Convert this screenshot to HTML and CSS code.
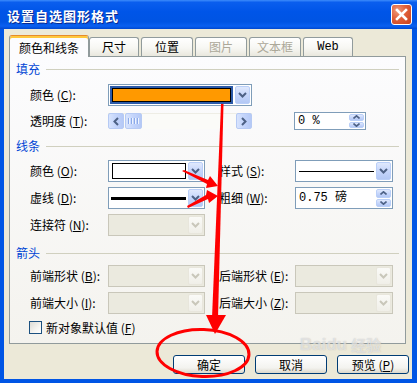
FILE: index.html
```html
<!DOCTYPE html>
<html lang="zh">
<head>
<meta charset="utf-8">
<title>设置自选图形格式</title>
<link rel="stylesheet" href="styles.css">
</head>
<body>
<div class="window">
  <div class="titlebar">
    <span class="title">设置自选图形格式</span>
    <div class="close">
      <svg width="13" height="13" viewBox="0 0 13 13"><path d="M2 2L11 11M11 2L2 11" stroke="#fff" stroke-width="2.6" stroke-linecap="square"/></svg>
    </div>
  </div>
  <div class="body">
    <div class="tabs">
      <div class="tab active w1">颜色和线条</div>
      <div class="tab w2">尺寸</div>
      <div class="tab w3">位置</div>
      <div class="tab w3 disabled">图片</div>
      <div class="tab w3 disabled">文本框</div>
      <div class="tab w4 latin">Web</div>
    </div>
    <div class="panel">
      <div class="head"><span>填充</span><i class="rule"></i></div>

      <div class="row gap8">
        <span class="lbl">颜色 (<u>C</u>):</span>
        <div class="combo wide">
          <div class="field hlfield"><div class="hl"><div class="swatch orange"></div></div></div>
          <div class="dd"><svg width="9" height="6" viewBox="0 0 9 6"><path d="M1 1L4.5 4.5L8 1" fill="none" stroke="#4D6185" stroke-width="2"/></svg></div>
        </div>
      </div>

      <div class="row short gap6">
        <span class="lbl">透明度 (<u>T</u>):</span>
        <div class="scroll">
          <div class="sbtn"><svg width="6" height="9" viewBox="0 0 6 9"><path d="M5 1L1.5 4.5L5 8" fill="none" stroke="#4D6185" stroke-width="2"/></svg></div>
          <div class="thumb"><i></i><i></i><i></i><i></i></div>
          <div class="track"></div>
          <div class="sbtn"><svg width="6" height="9" viewBox="0 0 6 9"><path d="M1 1L4.5 4.5L1 8" fill="none" stroke="#4D6185" stroke-width="2"/></svg></div>
        </div>
        <div class="spin pct">
          <span class="val">0 %</span>
          <div class="spinbtns">
            <div class="sp"><svg width="7" height="4" viewBox="0 0 7 4"><path d="M0.5 3.5L3.5 0.8L6.5 3.5" fill="none" stroke="#4D6185" stroke-width="1.6"/></svg></div>
            <div class="sp"><svg width="7" height="4" viewBox="0 0 7 4"><path d="M0.5 0.5L3.5 3.2L6.5 0.5" fill="none" stroke="#4D6185" stroke-width="1.6"/></svg></div>
          </div>
        </div>
      </div>

      <div class="head gap9"><span>线条</span><i class="rule"></i></div>

      <div class="row gap7">
        <span class="lbl">颜色 (<u>O</u>):</span>
        <div class="combo narrow">
          <div class="field swfield"><div class="swatch white"></div></div>
          <div class="dd"><svg width="9" height="6" viewBox="0 0 9 6"><path d="M1 1L4.5 4.5L8 1" fill="none" stroke="#4D6185" stroke-width="2"/></svg></div>
        </div>
        <span class="lbl rlbl">样式 (<u>S</u>):</span>
        <div class="combo rcombo">
          <div class="field linefield"><i class="line thin"></i></div>
          <div class="dd"><svg width="9" height="6" viewBox="0 0 9 6"><path d="M1 1L4.5 4.5L8 1" fill="none" stroke="#4D6185" stroke-width="2"/></svg></div>
        </div>
      </div>

      <div class="row gap5">
        <span class="lbl">虚线 (<u>D</u>):</span>
        <div class="combo narrow">
          <div class="field linefield"><i class="line thick"></i></div>
          <div class="dd"><svg width="9" height="6" viewBox="0 0 9 6"><path d="M1 1L4.5 4.5L8 1" fill="none" stroke="#4D6185" stroke-width="2"/></svg></div>
        </div>
        <span class="lbl rlbl">粗细 (<u>W</u>):</span>
        <div class="spin rcombo">
          <span class="val">0.75 磅</span>
          <div class="spinbtns">
            <div class="sp"><svg width="7" height="4" viewBox="0 0 7 4"><path d="M0.5 3.5L3.5 0.8L6.5 3.5" fill="none" stroke="#4D6185" stroke-width="1.6"/></svg></div>
            <div class="sp"><svg width="7" height="4" viewBox="0 0 7 4"><path d="M0.5 0.5L3.5 3.2L6.5 0.5" fill="none" stroke="#4D6185" stroke-width="1.6"/></svg></div>
          </div>
        </div>
      </div>

      <div class="row gap5">
        <span class="lbl">连接符 (<u>N</u>):</span>
        <div class="combo narrow off">
          <div class="field"></div>
          <div class="dd"><svg width="9" height="6" viewBox="0 0 9 6"><path d="M1 1L4.5 4.5L8 1" fill="none" stroke="#C9C7BA" stroke-width="2"/></svg></div>
        </div>
      </div>

      <div class="head gap10"><span>箭头</span><i class="rule"></i></div>

      <div class="row gap5">
        <span class="lbl">前端形状 (<u>B</u>):</span>
        <div class="combo narrow off">
          <div class="field"></div>
          <div class="dd"><svg width="9" height="6" viewBox="0 0 9 6"><path d="M1 1L4.5 4.5L8 1" fill="none" stroke="#C9C7BA" stroke-width="2"/></svg></div>
        </div>
        <span class="lbl rlbl">后端形状 (<u>E</u>):</span>
        <div class="combo rcombo off">
          <div class="field"></div>
          <div class="dd"><svg width="9" height="6" viewBox="0 0 9 6"><path d="M1 1L4.5 4.5L8 1" fill="none" stroke="#C9C7BA" stroke-width="2"/></svg></div>
        </div>
      </div>

      <div class="row gap5">
        <span class="lbl">前端大小 (<u>I</u>):</span>
        <div class="combo narrow off">
          <div class="field"></div>
          <div class="dd"><svg width="9" height="6" viewBox="0 0 9 6"><path d="M1 1L4.5 4.5L8 1" fill="none" stroke="#C9C7BA" stroke-width="2"/></svg></div>
        </div>
        <span class="lbl rlbl">后端大小 (<u>Z</u>):</span>
        <div class="combo rcombo off">
          <div class="field"></div>
          <div class="dd"><svg width="9" height="6" viewBox="0 0 9 6"><path d="M1 1L4.5 4.5L8 1" fill="none" stroke="#C9C7BA" stroke-width="2"/></svg></div>
        </div>
      </div>

      <div class="checkrow">
        <span class="check"></span>
        <span class="clbl">新对象默认值 (<u>F</u>)</span>
      </div>
    </div>
    <div class="buttons">
      <button class="btn">确定</button>
      <button class="btn">取消</button>
      <button class="btn">预览 (<u>P</u>)</button>
    </div>
  </div>

  <div class="watermark">
    <span class="wm-en">Bai</span><span class="wm-paw">du</span><span class="wm-cn">经验</span>
  </div>

  <svg class="annot" width="417" height="383" viewBox="0 0 417 383">
    <polygon points="221,104 223.5,104 218,318 212,318" fill="#FF0000"/>
    <polygon points="206,315 226,315 215,334" fill="#FF0000"/>
    <polygon points="182,171 184,170 208,180 210,176 218,186 206,188 207,184" fill="#FF0000"/>
    <polygon points="187,206 188,208 208,199 209,203 218,196 207,190 206,195" fill="#FF0000"/>
    <ellipse cx="203" cy="353" rx="46" ry="23.5" fill="none" stroke="#FF0000" stroke-width="3" transform="rotate(2 203 353)"/>
  </svg>
</div>
</body>
</html>
```

FILE: styles.css
```css
* { box-sizing: border-box; }

body {
  margin: 0;
  font-family: "Noto Sans CJK SC", "Noto Sans", sans-serif;
  font-size: 12px;
  color: #000;
}

u { text-decoration: underline; }

.window {
  position: relative;
  width: 417px;
  height: 383px;
  display: flex;
  flex-direction: column;
  background: #0055E5;
  overflow: hidden;
}

/* title bar */
.titlebar {
  flex: none;
  height: 29px;
  display: flex;
  align-items: center;
  justify-content: space-between;
  padding: 0 5px 0 7px;
  background: linear-gradient(#3D8CFB 0%, #0A5EEE 8%, #0055E8 40%, #0054E3 75%, #0A60F0 90%, #0048D0 100%);
}

.title {
  color: #fff;
  font-weight: bold;
  font-size: 13px;
  letter-spacing: 1px;
  line-height: 1;
  text-shadow: 1px 1px 0 #0A2A90;
  padding-top: 1px;
}

.close {
  width: 21px;
  height: 21px;
  border: 1px solid #fff;
  border-radius: 3px;
  background: radial-gradient(circle at 30% 30%, #F09A7A 0%, #E0603A 45%, #C8401C 100%);
  display: flex;
  align-items: center;
  justify-content: center;
}

/* window body */
.body {
  flex: 1;
  margin: 0 5px 4px 4px;
  background: #ECE9D8;
  display: flex;
  flex-direction: column;
  padding-top: 6px;
}

.tabs {
  display: flex;
  align-items: flex-end;
  height: 21px;
  margin-left: 5px;
  position: relative;
  z-index: 1;
}

.tab {
  height: 19px;
  border: 1px solid #919B9C;
  border-bottom: none;
  border-radius: 3px 3px 0 0;
  background: linear-gradient(#FFFFFF, #F7F7F3 55%, #E9E7DD);
  display: flex;
  align-items: center;
  justify-content: center;
  font-size: 12px;
  line-height: 1;
}

.tab.w1 { width: 80px; }
.tab.w2 { width: 50px; }
.tab.w3 { width: 52px; margin-left: 2px; }
.tab.w4 { width: 50px; margin-left: 2px; }

.tab.active {
  height: 22px;
  margin-bottom: -1px;
  background: #FCFCFE;
  border-top: 1px solid #E68B2C;
  box-shadow: inset 0 2px 0 #FFC83C;
  padding-top: 2px;
}

.tab.disabled { color: #ACA899; }
.tab.latin { font-family: "Liberation Mono", "DejaVu Sans Mono", monospace; font-size: 12px; }

.panel {
  height: 288px;
  margin: 0 6px 0 5px;
  border: 1px solid #919B9C;
  background: linear-gradient(#FCFCFE, #F4F3EE);
  padding: 5px 6px 0 6px;
  display: flex;
  flex-direction: column;
}

.head {
  display: flex;
  align-items: center;
  height: 14px;
  color: #0046D5;
  line-height: 1;
}

.head .rule {
  flex: 1;
  height: 1px;
  background: #D0D0BF;
  margin-left: 6px;
}

.gap5 { margin-top: 5px; }
.gap6 { margin-top: 6px; }
.gap7 { margin-top: 7px; }
.gap8 { margin-top: 8px; }
.gap9 { margin-top: 9px; }
.gap10 { margin-top: 10px; }

.row {
  display: flex;
  align-items: center;
  height: 22px;
  padding-left: 14px;
}

.row.short { height: 18px; }

.lbl {
  width: 78px;
  line-height: 1;
  white-space: nowrap;
}

.rlbl {
  width: 76px;
  margin-left: 14px;
}

/* combo boxes */
.combo {
  height: 22px;
  display: flex;
  border: 1px solid #7F9DB9;
  background: #fff;
}

.combo.wide { width: 144px; }
.combo.narrow { width: 97px; }
.rcombo { width: 98px; }

.combo .field {
  flex: 1;
  display: flex;
  align-items: center;
}

.combo .dd {
  width: 15px;
  margin: 1px;
  border: 1px solid #BACFF8;
  border-radius: 2px;
  background: linear-gradient(#E0E9FD, #C6D6FB 50%, #B3C8F5);
  display: flex;
  align-items: center;
  justify-content: center;
}

.combo.off { background: #EBEADF; border-color: #C9C7BA; }
.combo.off .dd { border-color: #E8E6DC; background: linear-gradient(#FAFAF7, #F0EFE8); }

.hlfield { padding: 1px; }
.hl {
  flex: 1;
  height: 100%;
  background: #2C5AA8;
  padding: 2px;
  display: flex;
}
.swatch { flex: 1; border: 1px solid #000; }
.swatch.orange { background: #FF9900; }
.swfield { padding: 2px 1px 2px 3px; }
.swatch.white { height: 100%; background: #fff; }

.linefield { padding: 0 1px 0 2px; }
.line { display: block; flex: 1; background: #000; }
.line.thin { height: 1px; margin-left: 1px; }
.line.thick { height: 3px; }

/* scrollbar */
.scroll {
  width: 144px;
  height: 16px;
  display: flex;
  background: #FBFBF8;
  border-top: 1px solid #EEEDE5;
}

.sbtn, .thumb {
  height: 16px;
  margin-top: -1px;
  border: 1px solid #B6CAF4;
  border-radius: 2px;
  background: linear-gradient(90deg, #D8E4FD, #C3D4FB 50%, #B5C9F6);
  display: flex;
  align-items: center;
  justify-content: center;
}

.sbtn { width: 16px; }
.thumb { width: 17px; margin-left: 1px; gap: 1px; }
.thumb i { display: block; width: 1px; height: 6px; background: #8CAAE8; box-shadow: 1px 0 0 #EEF4FE; margin-right: 1px; }
.track { flex: 1; }

/* spin boxes */
.spin {
  display: flex;
  align-items: center;
  border: 1px solid #7F9DB9;
  background: #fff;
  height: 22px;
}

.spin.pct {
  width: 72px;
  height: 18px;
  margin-left: 42px;
}

.spin .val {
  flex: 1;
  padding-left: 3px;
  line-height: 1;
  font-family: "Liberation Mono", "Noto Sans CJK SC", monospace;
  font-size: 12px;
}

.spinbtns {
  width: 15px;
  align-self: stretch;
  margin: 1px;
  display: flex;
  flex-direction: column;
  gap: 1px;
}

.sp {
  flex: 1;
  border: 1px solid #BACFF8;
  border-radius: 2px;
  background: linear-gradient(#E0E9FD, #C6D6FB 50%, #B3C8F5);
  display: flex;
  align-items: center;
  justify-content: center;
}

/* checkbox */
.checkrow {
  display: flex;
  align-items: center;
  height: 13px;
  margin-top: 7px;
  padding-left: 13px;
}

.check {
  width: 13px;
  height: 13px;
  border: 1px solid #1C5180;
  background: linear-gradient(135deg, #DCDBD5, #F5F4F0 60%, #FFFFFF);
}

.clbl { margin-left: 4px; line-height: 1; }

/* buttons */
.buttons {
  display: flex;
  justify-content: flex-end;
  gap: 10px;
  margin-top: 11px;
  padding-right: 3px;
}

.btn {
  width: 72px;
  height: 19px;
  padding: 0;
  border: 1px solid #003C74;
  border-radius: 3px;
  background: linear-gradient(#FFFFFF, #F3F3EF 70%, #DCD8CC);
  font-family: "Noto Sans CJK SC", "Noto Sans", sans-serif;
  font-size: 12px;
  line-height: 1;
  color: #000;
}

/* overlays */
.watermark {
  position: absolute;
  left: 300px;
  top: 336px;
  height: 17px;
  display: flex;
  align-items: center;
  line-height: 1;
  color: rgba(255, 255, 255, 0.55);
  text-shadow: 0 0 1px rgba(140, 140, 140, 0.55);
  font-family: "Liberation Sans", sans-serif;
  font-weight: bold;
  font-size: 17px;
  pointer-events: none;
}

.wm-cn { font-family: "Noto Sans CJK SC", sans-serif; font-size: 15px; margin-left: 4px; }

.annot {
  position: absolute;
  left: 0;
  top: 0;
  pointer-events: none;
}
```
